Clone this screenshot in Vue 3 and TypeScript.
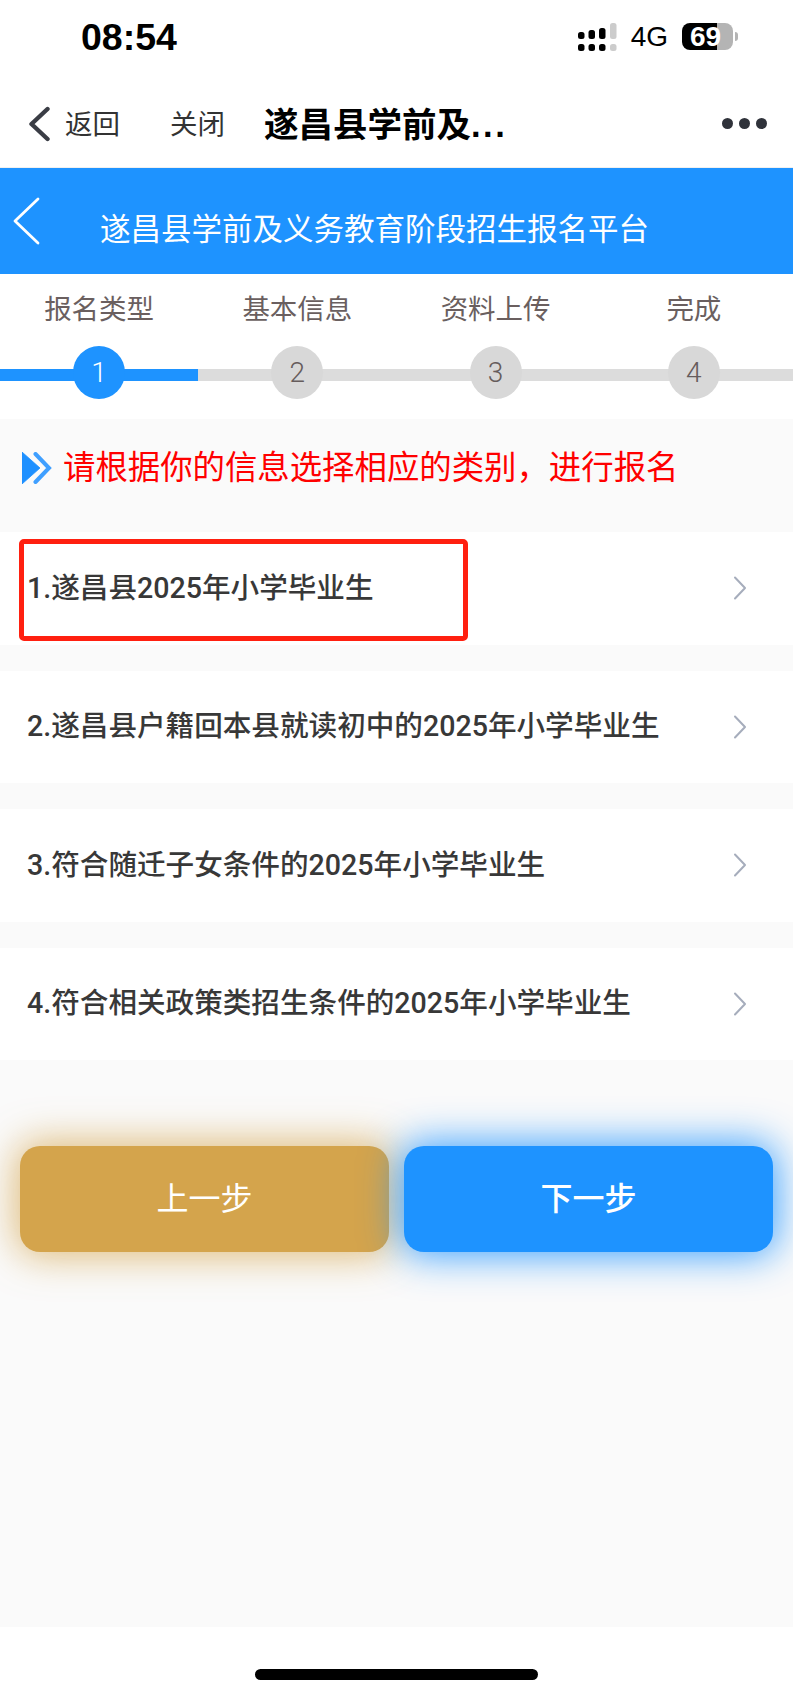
<script setup lang="ts">
const steps = [
  { label: '报名类型', n: 1, active: true },
  { label: '基本信息', n: 2, active: false },
  { label: '资料上传', n: 3, active: false },
  { label: '完成', n: 4, active: false },
]
const items = [
  '1.遂昌县2025年小学毕业生',
  '2.遂昌县户籍回本县就读初中的2025年小学毕业生',
  '3.符合随迁子女条件的2025年小学毕业生',
  '4.符合相关政策类招生条件的2025年小学毕业生',
]
</script>

<template>
  <div class="page">
    <header class="status">
      <span class="time">08:54</span>
      <div class="status-right">
        <svg class="signal" width="39" height="28" viewBox="0 0 39 28">
          <rect x="0" y="9" width="6.5" height="7" rx="2.5" fill="#000" />
          <rect x="0" y="21" width="6.5" height="7" rx="2.5" fill="#000" />
          <rect x="10.5" y="7" width="6.5" height="9" rx="2.5" fill="#000" />
          <rect x="10.5" y="21" width="6.5" height="7" rx="2.5" fill="#000" />
          <rect x="21" y="5" width="6.5" height="11" rx="2.5" fill="#000" />
          <rect x="21" y="21" width="6.5" height="7" rx="2.5" fill="#000" />
          <rect x="32" y="0" width="6.5" height="16" rx="2.5" fill="#ccc" />
          <rect x="32" y="21" width="6.5" height="7" rx="2.5" fill="#ccc" />
        </svg>
        <span class="net">4G</span>
        <div class="battery">69</div>
        <span class="battery-nub"></span>
      </div>
    </header>

    <nav class="nav">
      <svg class="nav-back" width="24" height="36" viewBox="0 0 24 36">
        <path d="M19.5 3 L3.5 18 L19.5 33" fill="none" stroke="#3a3d45" stroke-width="4.4" stroke-linecap="round" stroke-linejoin="round" />
      </svg>
      <span class="nav-link nav-return">返回</span>
      <span class="nav-link nav-close">关闭</span>
      <span class="nav-title">遂昌县学前及<span class="nav-dots">...</span></span>
      <div class="nav-more"><i></i><i></i><i></i></div>
    </nav>

    <div class="banner">
      <svg class="banner-back" width="28" height="48" viewBox="0 0 28 48">
        <path d="M26 2 L3 24 L26 46" fill="none" stroke="#fff" stroke-width="2.8" stroke-linecap="round" stroke-linejoin="round" />
      </svg>
      <span class="banner-title">遂昌县学前及义务教育阶段招生报名平台</span>
    </div>

    <section class="steps">
      <div v-for="s in steps" :key="s.n" class="step" :class="{ on: s.active }">
        <span class="step-label">{{ s.label }}</span>
        <div class="step-track">
          <span class="step-num">{{ s.n }}</span>
        </div>
      </div>
    </section>

    <main class="main">
      <div class="hint">
        <svg width="30" height="32" viewBox="0 0 30 32">
          <path d="M0 0 L18 16 L0 32 Z" fill="#1e90ff" stroke="#1e90ff" stroke-width="0.8" stroke-linejoin="round" />
          <path d="M13.5 2 L27 16 L13.5 30" fill="none" stroke="#3f9fff" stroke-width="4" stroke-linecap="round" stroke-linejoin="miter" />
        </svg>
        <span class="hint-text">请根据你的信息选择相应的类别，进行报名</span>
      </div>

      <ul class="list">
        <li v-for="(t, i) in items" :key="i" class="item">
          <span v-if="i === 0" class="highlight"></span>
          <span class="item-text">{{ t }}</span>
          <svg width="14" height="24" viewBox="0 0 14 24">
            <path d="M2 1.5 L12 12 L2 22.5" fill="none" stroke="#a6adbc" stroke-width="2" stroke-linecap="round" stroke-linejoin="round" />
          </svg>
        </li>
      </ul>

      <div class="actions">
        <button class="btn btn-prev" type="button">上一步</button>
        <button class="btn btn-next" type="button">下一步</button>
      </div>
    </main>

    <footer class="home"><span class="home-bar"></span></footer>
  </div>
</template>

<style>
html, body { margin: 0; background: #fff; }
</style>

<style scoped>
.page {
  width: 793px;
  min-height: 1695px;
  display: flex;
  flex-direction: column;
  background: #fff;
  font-family: "Liberation Sans", "Noto Sans CJK SC", sans-serif;
}
.status {
  height: 73px;
  flex: none;
  display: flex;
  align-items: flex-start;
  justify-content: space-between;
  padding: 0 55px 0 81px;
  box-sizing: border-box;
}
.time {
  font-size: 37.5px;
  font-weight: 700;
  line-height: 75px;
  color: #000;
}
.status-right {
  display: flex;
  align-items: center;
  height: 73px;
}
.net {
  font-size: 28px;
  line-height: 1;
  margin-left: 14px;
  margin-top: 1px;
  color: #000;
}
.battery {
  width: 51px;
  height: 27px;
  margin-left: 14px;
  padding-left: 8px;
  box-sizing: border-box;
  border-radius: 8px;
  background: linear-gradient(to right, #000 35px, #b4b4b4 35px);
  font-size: 28px;
  line-height: 27px;
  font-weight: 700;
  color: #fff;
}
.battery-nub {
  width: 3px;
  height: 9px;
  margin-left: 2px;
  border-radius: 0 3px 3px 0;
  background: #b4b4b4;
}
.nav {
  height: 95px;
  flex: none;
  display: flex;
  align-items: center;
  padding: 7px 26px 0 28px;
  box-sizing: border-box;
  border-bottom: 1px solid #f0f0f0;
}
.nav-link {
  padding-top: 3px;
  font-size: 27.5px;
  line-height: 1;
  color: #333;
}
.nav-return { margin-left: 13px; }
.nav-close { margin-left: 50px; }
.nav-title {
  margin-left: 39px;
  padding-top: 3px;
  font-size: 34.5px;
  font-weight: 700;
  line-height: 1;
  color: #000;
}
.nav-dots { letter-spacing: 2.5px; }
.nav-more {
  margin-left: auto;
  display: flex;
  gap: 6px;
}
.nav-more i {
  width: 11px;
  height: 11px;
  border-radius: 50%;
  background: #2f323a;
}
.banner {
  height: 106px;
  flex: none;
  display: flex;
  align-items: center;
  padding-left: 12px;
  box-sizing: border-box;
  background: #1e93ff;
}
.banner-title {
  margin-left: 60px;
  margin-top: 16px;
  font-size: 30.5px;
  line-height: 1;
  color: #fff;
}
.steps {
  height: 145px;
  flex: none;
  display: flex;
  background: #fff;
}
.step {
  flex: 1;
  display: flex;
  flex-direction: column;
  align-items: center;
  min-width: 0;
}
.step-label {
  height: 72px;
  line-height: 72px;
  font-size: 27.5px;
  color: #6a5f5f;
}
.step-track {
  position: relative;
  width: 100%;
  height: 53px;
  display: flex;
  align-items: center;
  justify-content: center;
}
.step-track::before {
  content: "";
  position: absolute;
  left: 0;
  right: 0;
  top: 23px;
  height: 12px;
  background: #dcdcdc;
}
.step.on .step-track::before { background: #1e93ff; }
.step-num {
  position: relative;
  width: 52px;
  height: 53px;
  border-radius: 50%;
  background: #d8d8d8;
  color: #665c5c;
  font-family: Roboto, "Liberation Sans", sans-serif;
  font-weight: 300;
  font-size: 28px;
  line-height: 53px;
  text-align: center;
}
.step.on .step-num {
  background: #1e93ff;
  color: #fff;
}
.main {
  flex: 1;
  display: flex;
  flex-direction: column;
  background: #fafafa;
}
.hint {
  height: 113px;
  flex: none;
  display: flex;
  align-items: flex-start;
  padding: 33px 0 0 22px;
  box-sizing: border-box;
}
.hint-text {
  margin-left: 11px;
  font-size: 32.4px;
  line-height: 32px;
  color: #ff0000;
}
.list {
  list-style: none;
  margin: 0;
  padding: 0;
  display: flex;
  flex-direction: column;
  gap: 26px;
}
.item {
  position: relative;
  height: 112.5px;
  display: flex;
  align-items: center;
  justify-content: space-between;
  padding: 0 46px 0 27px;
  box-sizing: border-box;
  background: #fff;
}
.item-text {
  font-family: Roboto, "Noto Sans CJK SC", sans-serif;
  font-size: 28.6px;
  font-weight: 500;
  line-height: 1;
  color: #383838;
}
.highlight {
  position: absolute;
  left: 19px;
  top: 7px;
  width: 449px;
  height: 102px;
  box-sizing: border-box;
  border: 5.5px solid #ff2010;
  border-radius: 5px;
}
.actions {
  margin-top: 86px;
  display: flex;
  gap: 15px;
  padding: 0 20px;
}
.btn {
  flex: 1;
  height: 106px;
  border: 0;
  border-radius: 20px;
  color: #fff;
  font-family: inherit;
  font-size: 32px;
  padding: 0 0 6px;
}
.btn-prev {
  background: #d4a44c;
  box-shadow: 0 0 38px 4px rgba(212, 164, 76, 0.75);
}
.btn-next {
  background: #1e93ff;
  font-weight: 500;
  box-shadow: 0 0 38px 4px rgba(30, 147, 255, 0.85);
}
.home {
  height: 68px;
  flex: none;
  display: flex;
  justify-content: center;
  padding-top: 42px;
  box-sizing: border-box;
}
.home-bar {
  width: 283px;
  height: 11px;
  border-radius: 6px;
  background: #000;
}
</style>
